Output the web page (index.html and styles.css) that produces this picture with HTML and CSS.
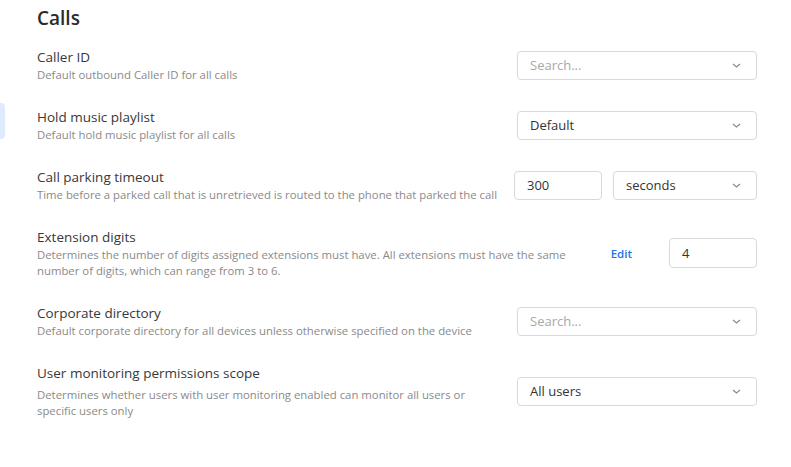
FILE: index.html
```html
<!DOCTYPE html>
<html lang="en">
<head>
<meta charset="utf-8">
<title>Calls</title>
<link rel="stylesheet" href="styles.css">
</head>
<body>
<div class="tab-marker"></div>
<main class="page">
  <h1 class="title">Calls</h1>
  <div class="rows">
    <div class="row">
      <div class="info">
        <div class="label">Caller ID</div>
        <div class="desc">Default outbound Caller ID for all calls</div>
      </div>
      <div class="controls">
        <div class="select wide placeholder"><span>Search...</span><svg class="chev" width="9" height="5" viewBox="0 0 9 5"><path d="M1 1l3.5 3L8 1" fill="none" stroke="#8a8a8a" stroke-width="1.2"/></svg></div>
      </div>
    </div>
    <div class="row">
      <div class="info">
        <div class="label">Hold music playlist</div>
        <div class="desc">Default hold music playlist for all calls</div>
      </div>
      <div class="controls">
        <div class="select wide"><span>Default</span><svg class="chev" width="9" height="5" viewBox="0 0 9 5"><path d="M1 1l3.5 3L8 1" fill="none" stroke="#8a8a8a" stroke-width="1.2"/></svg></div>
      </div>
    </div>
    <div class="row">
      <div class="info">
        <div class="label">Call parking timeout</div>
        <div class="desc">Time before a parked call that is unretrieved is routed to the phone that parked the call</div>
      </div>
      <div class="controls gap-s">
        <div class="input num"><span>300</span></div>
        <div class="select unit"><span>seconds</span><svg class="chev" width="9" height="5" viewBox="0 0 9 5"><path d="M1 1l3.5 3L8 1" fill="none" stroke="#8a8a8a" stroke-width="1.2"/></svg></div>
      </div>
    </div>
    <div class="row">
      <div class="info">
        <div class="label">Extension digits</div>
        <div class="desc">Determines the number of digits assigned extensions must have. All extensions must have the same<br>number of digits, which can range from 3 to 6.</div>
      </div>
      <div class="controls gap-l">
        <a class="edit" href="#">Edit</a>
        <div class="input num tall"><span>4</span></div>
      </div>
    </div>
    <div class="row">
      <div class="info">
        <div class="label">Corporate directory</div>
        <div class="desc">Default corporate directory for all devices unless otherwise specified on the device</div>
      </div>
      <div class="controls">
        <div class="select wide placeholder"><span>Search...</span><svg class="chev" width="9" height="5" viewBox="0 0 9 5"><path d="M1 1l3.5 3L8 1" fill="none" stroke="#8a8a8a" stroke-width="1.2"/></svg></div>
      </div>
    </div>
    <div class="row">
      <div class="info">
        <div class="label">User monitoring permissions scope</div>
        <div class="desc spaced">Determines whether users with user monitoring enabled can monitor all users or<br>specific users only</div>
      </div>
      <div class="controls">
        <div class="select wide"><span>All users</span><svg class="chev" width="9" height="5" viewBox="0 0 9 5"><path d="M1 1l3.5 3L8 1" fill="none" stroke="#8a8a8a" stroke-width="1.2"/></svg></div>
      </div>
    </div>
  </div>
</main>
</body>
</html>
```

FILE: styles.css
```css
* { box-sizing: border-box; }
html, body { margin: 0; padding: 0; background: #fff; }
body {
  font-family: "Open Sans", "Noto Sans", sans-serif;
  color: #333;
  width: 791px;
  height: 467px;
  overflow: hidden;
}
.tab-marker {
  position: absolute;
  left: 0;
  top: 103px;
  width: 5px;
  height: 36px;
  background: #deebfd;
  border-radius: 0 4px 4px 0;
}
.page {
  padding: 4px 34px 0 37px;
}
.title {
  margin: 0;
  font-size: 19px;
  font-weight: 600;
  line-height: 28px;
  color: #2b2b2b;
  height: 31px;
}
.row {
  display: flex;
  align-items: center;
  justify-content: space-between;
  padding: 12.5px 0;
}
.info { white-space: nowrap; }
.label {
  font-size: 13.5px;
  line-height: 18px;
  color: #383838;
}
.desc {
  margin-top: 1px;
  font-size: 11.35px;
  line-height: 16px;
  color: #8a8a8a;
}
.desc.spaced { margin-top: 5px; }
.controls {
  display: flex;
  align-items: center;
}
.gap-s { gap: 11px; }
.gap-l { gap: 37px; }
.select, .input {
  height: 29px;
  border: 1px solid #d9d9d9;
  border-radius: 4px;
  display: flex;
  align-items: center;
  justify-content: space-between;
  padding: 0 15px 0 12px;
  font-size: 13px;
  color: #333;
  background: #fff;
}
.wide { width: 240px; }
.unit { width: 144px; }
.num { width: 88px; }
.tall { height: 30px; }
.placeholder span { color: #a8a8a8; }
.chev { display: block; }
.edit {
  font-size: 11.5px;
  font-weight: 600;
  color: #1a73e8;
  text-decoration: none;
}
```
